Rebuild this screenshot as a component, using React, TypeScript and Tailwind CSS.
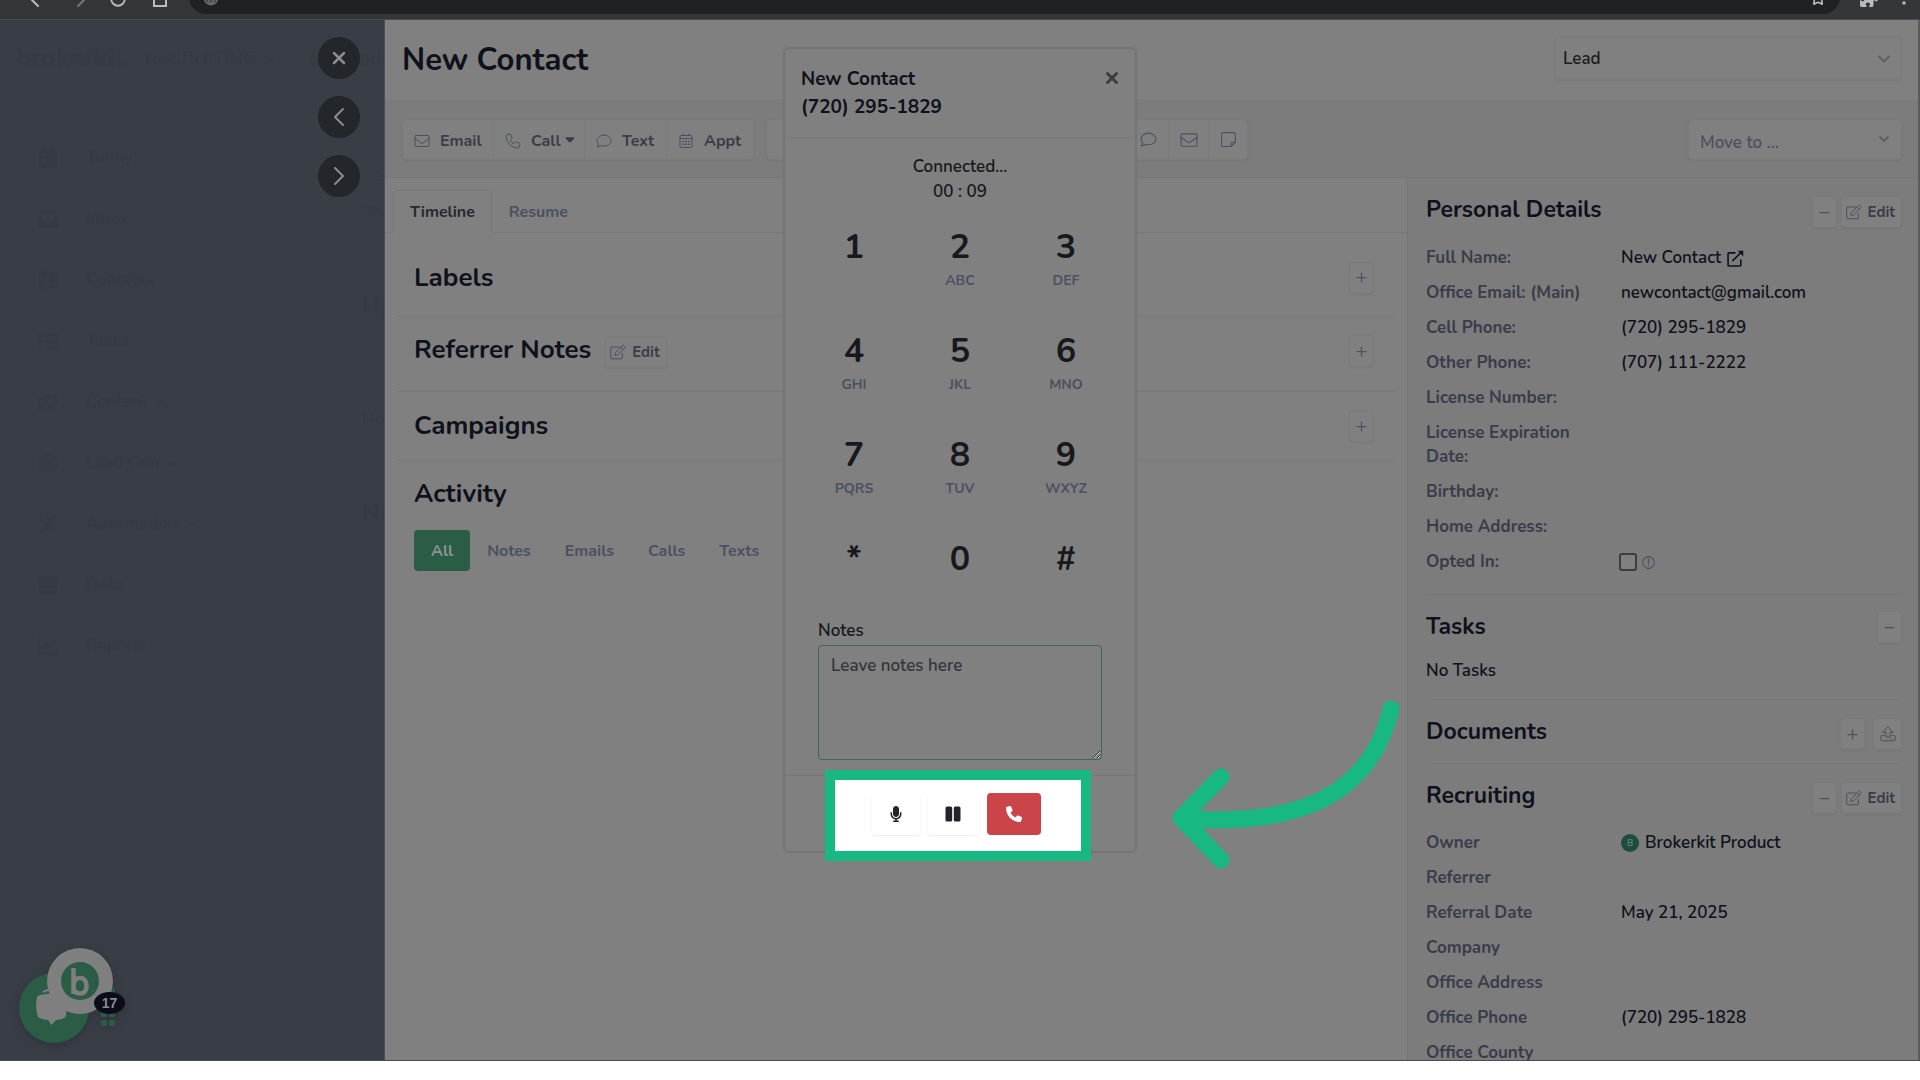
import React from "react";
import type { ReactNode } from "react";
import {
  ArrowLeft,
  ArrowRight,
  RotateCw,
  Globe,
  Star,
  X,
  ChevronDown,
  ChevronLeft,
  ChevronRight,
  Plus,
  Minus,
} from "lucide-react";
import {
  FaCalendarDay,
  FaInbox,
  FaAddressBook,
  FaListCheck,
  FaPhotoFilm,
  FaBullseye,
  FaWandMagicSparkles,
  FaDatabase,
  FaChartLine,
  FaMicrophone,
  FaPhone,
  FaPuzzlePiece,
  FaEllipsisVertical,
  FaCaretDown,
} from "react-icons/fa6";

/* ---------- line icons ---------- */

type IconProps = { className?: string; children: ReactNode };

function LineIcon({ className = "size-4", children }: IconProps) {
  return (
    <svg
      viewBox="0 0 16 16"
      className={className}
      fill="none"
      stroke="currentColor"
      strokeWidth="1"
      strokeLinecap="round"
      strokeLinejoin="round"
      aria-hidden="true"
    >
      {children}
    </svg>
  );
}

const MailIcon = ({ className }: { className?: string }) => (
  <LineIcon className={className}>
    <rect x="1" y="2.5" width="14" height="11" rx="1" />
    <path d="M1 5.5 L6.8 9.9 Q8 10.8 9.2 9.9 L15 5.5" />
  </LineIcon>
);
const HandsetIcon = () => (
  <LineIcon>
    <path d="M4.7 1.1 L1.7 1.8 C1.3 1.9 1 2.2 1 2.6 C1 9.5 6.5 15 13.4 15 C13.8 15 14.1 14.7 14.2 14.3 L14.9 11.3 C15 10.9 14.8 10.5 14.4 10.3 L11.2 8.9 C10.9 8.8 10.5 8.9 10.2 9.1 L8.8 10.8 C7.3 10 6 8.7 5.2 7.2 L6.9 5.8 C7.1 5.5 7.2 5.1 7.1 4.8 L5.7 1.6 C5.5 1.2 5.1 1 4.7 1.1 Z" />
  </LineIcon>
);
const ChatIcon = ({ className }: { className?: string }) => (
  <LineIcon className={className}>
    <path d="M8 2 C4.1 2 1.1 4.4 1.1 7.5 C1.1 8.9 1.7 10.1 2.6 11.1 C2.4 12.3 1.8 13.3 1.1 14 C2.6 14 3.9 13.5 4.9 12.6 C5.9 12.9 6.9 13 8 13 C11.9 13 14.9 10.6 14.9 7.5 C14.9 4.4 11.9 2 8 2 Z" />
  </LineIcon>
);
const CalendarIcon = () => (
  <LineIcon>
    <rect x="2" y="2.5" width="12" height="12" rx="1.3" />
    <path d="M2 5.5 H14 M5 1 V2.5 M11 1 V2.5" />
    <path d="M5 8.5 H5.7 M7.7 8.5 H8.4 M10.4 8.5 H11.1 M5 11.3 H5.7 M7.7 11.3 H8.4 M10.4 11.3 H11.1" strokeWidth="1.4" />
  </LineIcon>
);
const NoteIcon = () => (
  <LineIcon className="size-[17px]">
    <path d="M14.5 10.5 L10.5 14.5 H2.5 Q1.5 14.5 1.5 13.5 V2.5 Q1.5 1.5 2.5 1.5 H13.5 Q14.5 1.5 14.5 2.5 Z M14.5 10.5 H11.5 Q10.5 10.5 10.5 11.5 V14.5" />
  </LineIcon>
);
const EditIcon = () => (
  <LineIcon>
    <path d="M9.5 3 H1.5 Q.7 3 .7 3.8 V14 Q.7 14.8 1.5 14.8 H11.5 Q12.3 14.8 12.3 14 V9.5" />
    <path d="M5.5 8.6 L12.4 1.7 Q13.2 .9 14 1.7 L14.7 2.4 Q15.5 3.2 14.7 4 L7.8 10.9 L5.2 11.3 Z M11 3.2 L13.2 5.4" />
  </LineIcon>
);
const UploadIcon = () => (
  <LineIcon>
    <path d="M8 1 L13 6.3 H10 V11 H6 V6.3 H3 Z" />
    <path d="M4.5 9.5 H2.5 Q.6 9.5 .6 11.2 V13 Q.6 14.8 2.5 14.8 H13.5 Q15.4 14.8 15.4 13 V11.2 Q15.4 9.5 13.5 9.5 H11.5 M10.3 12.6 H10.5 M12.6 12.6 H12.8" />
  </LineIcon>
);
const OpenIcon = () => (
  <svg viewBox="0 0 16 16" className="size-[17px]" fill="none" stroke="currentColor" strokeWidth="1.5" strokeLinejoin="round" aria-hidden="true">
    <path d="M8 2.7 H1.8 Q1 2.7 1 3.5 V14.2 Q1 15 1.8 15 H12.2 Q13 15 13 14.2 V9" />
    <path d="M5 10.5 L13.5 2" />
    <path d="M10 .8 H15.3 V6.1 Z" fill="currentColor" stroke="none" />
  </svg>
);

/* ---------- shared pieces ---------- */

const box = "border border-[#797a7b] bg-[#808080] rounded shadow-[0_1px_2px_#00000010]";

function SmallButton({ label, children }: { label: string; children: ReactNode }) {
  return (
    <button type="button" aria-label={label} className={`${box} flex h-8 min-w-6 items-center justify-center px-1 text-[#4b5160]`}>
      {children}
    </button>
  );
}

function EditButton() {
  return (
    <button type="button" className={`${box} flex h-8 items-center gap-1.5 px-1 pr-1.5 text-[15px] font-bold text-[#393d49]`}>
      <span className="text-[#4b5160]">
        <EditIcon />
      </span>
      Edit
    </button>
  );
}

const plus = <Plus className="size-[15px]" strokeWidth={2} />;
const minus = <Minus className="size-[15px]" strokeWidth={2} />;

/* ---------- browser bar ---------- */

function BrowserBar() {
  return (
    <header className="flex h-5 shrink-0 items-start overflow-hidden border-b border-[#4a4b4e] bg-[#35363a] text-[#bcbcbd]">
      <div className="-mt-[13px] flex w-[189px] shrink-0 items-center pl-[26px]">
        <ArrowLeft className="mr-4 size-6" strokeWidth={2} />
        <ArrowRight className="mr-[19px] size-6 text-[#77787a]" strokeWidth={2} />
        <RotateCw className="mr-[26px] size-[18px]" strokeWidth={2.5} />
        <svg viewBox="0 0 14 16" className="h-4 w-3.5" fill="none" stroke="currentColor" strokeWidth="2" aria-hidden="true">
          <path d="M1 6 L7 1 L13 6 V15 H1 Z" />
        </svg>
      </div>
      <div className="-mt-5 flex h-[34px] flex-1 items-end justify-between rounded-full bg-[#202124] px-3.5 pb-2">
        <Globe className="size-4 fill-[#4a4b4e] text-[#6c6d70]" />
        <Star className="size-4" strokeWidth={2.5} />
      </div>
      <div className="-mt-3 flex w-20 shrink-0 items-center justify-between pt-px pr-2 pl-5">
        <FaPuzzlePiece className="size-[18px]" />
        <FaEllipsisVertical className="size-4" />
      </div>
    </header>
  );
}

/* ---------- dimmed navigation ---------- */

const nav = [
  { name: "Today", icon: FaCalendarDay, menu: false },
  { name: "Inbox", icon: FaInbox, menu: false },
  { name: "Contacts", icon: FaAddressBook, menu: false },
  { name: "Tasks", icon: FaListCheck, menu: false },
  { name: "Content", icon: FaPhotoFilm, menu: true },
  { name: "Lead Gen", icon: FaBullseye, menu: true },
  { name: "Automation", icon: FaWandMagicSparkles, menu: true },
  { name: "Data", icon: FaDatabase, menu: true },
  { name: "Reports", icon: FaChartLine, menu: false },
];

function Sidebar() {
  const circle = "flex size-[42px] items-center justify-center rounded-full bg-[#23262a] text-[#8b8c8e]";
  return (
    <aside className="relative w-[385px] shrink-0 overflow-hidden border-r border-[#4b4e55] bg-[#393d46] text-[#363a43]">
      <div className="flex h-[78px] items-center pl-4 whitespace-nowrap">
        <span className="w-[129px] shrink-0 text-[25px] font-extrabold">brokerkit</span>
        <span className="flex w-[165px] shrink-0 items-center gap-2 text-[19px]">
          RECRUITING <FaCaretDown className="size-3" />
        </span>
        <span className="text-[19px] font-semibold">BK Product</span>
      </div>
      <div className="flex pt-[29px]">
        <nav className="flex w-[362px] shrink-0 flex-col pl-[38px]">
          {nav.map(({ name, icon: Icon, menu }) => (
            <a key={name} href="#" className="flex h-[61px] items-center text-[17px] font-semibold">
              <Icon className="mr-7 size-5" />
              {name}
              {menu && <FaCaretDown className="ml-2 size-3" />}
            </a>
          ))}
        </nav>
        <div className="flex flex-col whitespace-nowrap">
          <p className="mt-9 ml-3.5 text-[17px]">Status</p>
          <p className="mt-3 text-[17px]">Show</p>
          <p className="mt-16 text-2xl font-bold">Upcoming</p>
          <p className="mt-[85px] text-[17px]">No tasks</p>
          <p className="mt-16 text-2xl font-bold">Notes</p>
        </div>
      </div>

      <div className="absolute top-[17px] right-6 flex flex-col gap-[17px]">
        <button type="button" aria-label="Close" className={circle}>
          <X className="size-5" strokeWidth={3} />
        </button>
        <button type="button" aria-label="Previous contact" className={circle}>
          <ChevronLeft className="size-8" strokeWidth={1.5} />
        </button>
        <button type="button" aria-label="Next contact" className={circle}>
          <ChevronRight className="size-8" strokeWidth={1.5} />
        </button>
      </div>

      <ChatWidget />
    </aside>
  );
}

function ChatWidget() {
  return (
    <button type="button" aria-label="Open chat" className="absolute bottom-[9px] left-[12px] h-[114px] w-[120px]">
      <svg viewBox="0 0 120 114" className="h-[114px] w-[120px] drop-shadow-[0_2px_4px_#00000030]" aria-hidden="true">
        <circle cx="42" cy="71" r="35" fill="#2b5c45" />
        <path d="M28 58 Q41 55 54 58 Q55 70 54 79 Q53 82 44 83 L39.5 88 L36 83 Q27 82 25.5 79 Q23 68 25 60 Q26 58 28 58 Z" fill="#7f7f7f" />
        <path d="M31 55 Q36 52 42 53" stroke="#7f7f7f" strokeWidth="2" fill="none" />
        <g fill="#2b5c45">
          <rect x="89" y="74" width="6" height="6" rx="1.5" />
          <rect x="97" y="74" width="6" height="6" rx="1.5" />
          <rect x="89" y="83" width="6" height="6" rx="1.5" />
          <rect x="97" y="83" width="6" height="6" rx="1.5" />
          <rect x="95" y="51" width="8" height="8" rx="2" />
        </g>
        <circle cx="68" cy="44" r="33" fill="#7f7f7f" />
        <circle cx="68" cy="44" r="19" fill="#2b5c45" />
        <path d="M61.5 31 V57 M61.5 49 C61.5 43.5 64 41 68 41 C72 41 74.5 44 74.5 49 C74.5 54 72 56.5 68 56.5 C64 56.5 61.5 54 61.5 49" fill="none" stroke="#7f7f7f" strokeWidth="4.5" />
        <ellipse cx="97.5" cy="66" rx="15.5" ry="11" fill="#0a0d17" />
      </svg>
      <span className="absolute top-[55px] left-[82px] flex h-[22px] w-[31px] items-center justify-center font-['Liberation_Sans'] text-sm font-bold text-[#8a8b8e]">
        17
      </span>
    </button>
  );
}

/* ---------- contact header and toolbar ---------- */

function ContactHeader() {
  return (
    <div className="flex h-[81px] shrink-0 items-start justify-between border-b border-[#787879] pt-[17px] pr-4 pl-[17px]">
      <h1 className="text-[31px] leading-[46px] font-bold text-[#0f121b]">New Contact</h1>
      <div className="relative">
        <select
          aria-label="Contact stage"
          className={`${box} h-[43px] w-[348px] appearance-none px-2 text-[17px] font-semibold text-[#1b1d21]`}
        >
          <option>Lead</option>
        </select>
        <ChevronDown className="pointer-events-none absolute top-3 right-2 size-5 text-[#5f6063]" strokeWidth={2.5} />
      </div>
    </div>
  );
}

function Toolbar() {
  const item = "flex h-full items-center gap-2.5 border-r border-[#797a7b] pt-0.5 pl-[11px] last:border-r-0";
  const icon = "text-[#4b5160]";
  return (
    <div className="flex h-[77px] shrink-0 items-center justify-between border-b border-[#757677] bg-[#7c7c7d] pt-px pr-4 pl-[17px]">
      <div className="flex gap-3 text-base font-bold text-[#393d49]">
        <div className={`${box} flex h-[41px]`}>
          <button type="button" className={`${item} w-[91px]`}>
            <span className={icon}><MailIcon /></span>Email
          </button>
          <button type="button" className={`${item} w-[91px]`}>
            <span className={icon}><HandsetIcon /></span>
            <span className="flex items-center gap-0.5">Call <FaCaretDown className="-mt-1 size-3.5" /></span>
          </button>
          <button type="button" className={`${item} w-[82px]`}>
            <span className={icon}><ChatIcon /></span>Text
          </button>
          <button type="button" className={`${item} w-[86px]`}>
            <span className={icon}><CalendarIcon /></span>Appt
          </button>
        </div>
        <div className={`${box} flex h-[41px] w-[482px] justify-end ${icon}`}>
          <button type="button" aria-label="Log text" className="flex w-[40px] items-center justify-center border-r border-[#797a7b]">
            <ChatIcon className="size-[17px]" />
          </button>
          <button type="button" aria-label="Log email" className="flex w-10 items-center justify-center border-r border-[#797a7b]">
            <MailIcon className="size-[18px]" />
          </button>
          <button type="button" aria-label="Log note" className="flex w-[38px] items-center justify-center">
            <NoteIcon />
          </button>
        </div>
      </div>
      <div className="relative">
        <select
          aria-label="Move to"
          className={`${box} h-[41px] w-[214px] appearance-none px-[11px] pt-1.5 text-[17px] font-semibold text-[#4b5160]`}
        >
          <option>Move to ...</option>
        </select>
        <ChevronDown className="pointer-events-none absolute top-3 right-2.5 size-4 text-[#5f6063]" strokeWidth={3} />
      </div>
    </div>
  );
}

/* ---------- timeline column ---------- */

function Timeline() {
  const section = "ml-[11px] mr-3 flex items-center justify-between border-b border-[#777778] pr-[21px] pl-[18px]";
  const heading = "text-[26px] font-bold leading-8 text-[#0f121b]";
  return (
    <main className="min-w-0 flex-1 bg-[#808080]">
      <div role="tablist" className="flex h-[55px] items-end border-b border-[#787879] pl-2 text-base font-bold">
        <button type="button" role="tab" aria-selected="true" className="-mb-px h-[43px] rounded-t border border-b-0 border-[#757677] bg-[#808080] px-4 text-[#26292e]">
          Timeline
        </button>
        <button type="button" role="tab" aria-selected="false" className="h-[41px] px-[17px] text-[#4b5160]">
          Resume
        </button>
      </div>

      <section className={`${section} h-[84px] pt-1.5`}>
        <h2 className={heading}>Labels</h2>
        <SmallButton label="Add label">{plus}</SmallButton>
      </section>
      <section className={`${section} h-[75px]`}>
        <div className="flex items-center gap-3.5 pb-1">
          <h2 className={`${heading} pb-1`}>Referrer Notes</h2>
          <EditButton />
        </div>
        <div className="pb-1.5">
          <SmallButton label="Expand referrer notes">{plus}</SmallButton>
        </div>
      </section>
      <section className={`${section} h-[69px]`}>
        <h2 className={heading}>Campaigns</h2>
        <SmallButton label="Add campaign">{plus}</SmallButton>
      </section>
      <section className="pt-[17px] pl-[29px]">
        <h2 className={heading}>Activity</h2>
        <div className="mt-5 flex h-[41px] items-center text-base font-bold text-[#4b5160]">
          <button type="button" className="h-full rounded bg-[#2b5c45] px-[17px] text-[#8b9590]">All</button>
          <button type="button" className="px-[17px]">Notes</button>
          <button type="button" className="px-[17px]">Emails</button>
          <button type="button" className="px-[17px]">Calls</button>
          <button type="button" className="px-[17px]">Texts</button>
        </div>
      </section>
    </main>
  );
}

/* ---------- details column ---------- */

function Row({ label, value }: { label: string; value?: ReactNode }) {
  return (
    <div className="flex">
      <dt className="w-[195px] shrink-0 pr-10 font-bold text-[#393d49]">{label}</dt>
      <dd className="flex-1 font-semibold text-[#0f121b]">{value}</dd>
    </div>
  );
}

function Details() {
  const heading = "text-[23px] font-bold leading-8 text-[#0f121b]";
  const top = "flex items-start justify-between";
  return (
    <aside className="w-[511px] shrink-0 overflow-hidden border-l border-[#757677] bg-[#7c7c7d] pr-4 pl-[18px] text-[17px] leading-6">
      <section className="border-b border-[#757677] pt-4 pb-5">
        <div className={top}>
          <h2 className={heading}>Personal Details</h2>
          <div className="flex gap-1 pt-0.5">
            <SmallButton label="Collapse personal details">{minus}</SmallButton>
            <EditButton />
          </div>
        </div>
        <dl className="mt-[18px] flex flex-col gap-[11px]">
          <Row
            label="Full Name:"
            value={
              <a href="#" className="flex items-center gap-1.5">
                New Contact <OpenIcon />
              </a>
            }
          />
          <Row label="Office Email: (Main)" value="newcontact@gmail.com" />
          <Row label="Cell Phone:" value="(720) 295-1829" />
          <Row label="Other Phone:" value="(707) 111-2222" />
          <Row label="License Number:" />
          <Row label="License Expiration Date:" />
          <Row label="Birthday:" />
          <Row label="Home Address:" />
          <Row
            label="Opted In:"
            value={
              <span className="-ml-0.5 flex h-6 items-center gap-[5px]">
                <input type="checkbox" aria-label="Opted in" className="size-[18px] appearance-none rounded-[3px] border-2 border-[#3d3d3f] bg-[#808080]" />
                <LineIcon className="size-[13px] text-[#4b5160]">
                  <circle cx="8" cy="8" r="7.2" strokeWidth="1.3" />
                  <path d="M8 4 V8.8 M8 11.6 V11.8" strokeWidth="1.7" />
                </LineIcon>
              </span>
            }
          />
        </dl>
      </section>
      <section className="border-b border-[#757677] pt-4 pb-4">
        <div className={top}>
          <h2 className={heading}>Tasks</h2>
          <SmallButton label="Collapse tasks">{minus}</SmallButton>
        </div>
        <p className="mt-4 font-semibold text-[#0f121b]">No Tasks</p>
      </section>
      <section className="border-b border-[#757677] pt-4 pb-[13px]">
        <div className={top}>
          <h2 className={heading}>Documents</h2>
          <div className="flex gap-2 pt-0.5">
            <SmallButton label="Add document">{plus}</SmallButton>
            <button type="button" aria-label="Upload document" className={`${box} flex h-8 w-[29px] items-center justify-center text-[#4b5160]`}>
              <UploadIcon />
            </button>
          </div>
        </div>
      </section>
      <section className="pt-4">
        <div className={top}>
          <h2 className={heading}>Recruiting</h2>
          <div className="flex gap-1 pt-0.5">
            <SmallButton label="Collapse recruiting">{minus}</SmallButton>
            <EditButton />
          </div>
        </div>
        <dl className="mt-[17px] flex flex-col gap-[11px]">
          <Row
            label="Owner"
            value={
              <span className="flex items-center gap-1.5">
                <span className="flex size-[18px] items-center justify-center rounded-full bg-[#1f4c40] text-[9px] leading-none font-bold text-[#5d7d73]">B</span>
                Brokerkit Product
              </span>
            }
          />
          <Row label="Referrer" />
          <Row label="Referral Date" value="May 21, 2025" />
          <Row label="Company" />
          <Row label="Office Address" />
          <Row label="Office Phone" value="(720) 295-1828" />
          <Row label="Office County" />
        </dl>
      </section>
    </aside>
  );
}

/* ---------- call dialog ---------- */

const keys = [
  ["1", ""],
  ["2", "ABC"],
  ["3", "DEF"],
  ["4", "GHI"],
  ["5", "JKL"],
  ["6", "MNO"],
  ["7", "PQRS"],
  ["8", "TUV"],
  ["9", "WXYZ"],
  ["*", ""],
  ["0", ""],
  ["#", ""],
];

function CallDialog() {
  const control = "flex h-[42px] items-center justify-center rounded";
  return (
    <div role="dialog" aria-label="Call" className="absolute top-[47px] left-1/2 w-[354px] -translate-x-1/2 rounded-md border-2 border-[#747475] bg-[#808080] text-[#17191c]">
      <div className="flex items-start justify-between border-b border-[#757677] pt-4 pr-3.5 pb-4 pl-4 text-[19px] leading-7 font-bold text-[#0f121b]">
        <p>
          New Contact
          <br />
          (720) 295-1829
        </p>
        <button type="button" aria-label="Close" className="mt-1 text-[#3c3d3f]">
          <X className="size-[18px]" strokeWidth={4} />
        </button>
      </div>
      <div className="px-4 pt-4 text-center">
        <p className="text-[17px] leading-[25px] font-semibold">
          Connected...
          <br />
          00 : 09
        </p>
        <div className="mt-[5px] grid grid-cols-3 grid-rows-[104px_104px_104px_96px]">
          {keys.map(([digit, letters]) => (
            <button key={digit} type="button" className="flex flex-col items-center pt-4">
              <span className="text-[34px] leading-[44px] font-bold">{digit}</span>
              <span className="text-sm leading-6 font-bold text-[#4b5160]">{letters}</span>
            </button>
          ))}
        </div>
      </div>
      <div className="flex flex-col px-[33px] pb-[15px]">
        <label htmlFor="call-notes" className="text-[17px] leading-7 font-semibold">
          Notes
        </label>
        <textarea
          id="call-notes"
          placeholder="Leave notes here"
          className="h-[115px] rounded border border-[#3b6a56] bg-[#808080] px-3 py-2 text-[17px] leading-6 font-semibold placeholder:text-[#33363c]"
        />
      </div>
      <div className="flex justify-center border-t border-[#757677] pt-1">
        <div className="mr-1 flex h-[71px] w-[246px] items-center justify-center bg-white pr-1 pb-1 text-[#212529] ring-10 ring-[#18b882]">
          <button type="button" aria-label="Mute" className={`${control} w-12 shadow-[0_1px_2px_#00000014]`}>
            <FaMicrophone className="size-4" />
          </button>
          <button type="button" aria-label="Hold" className={`${control} ml-2 w-[51px] shadow-[0_1px_2px_#00000014]`}>
            <svg viewBox="0 0 16 16" className="size-4" fill="currentColor" aria-hidden="true">
              <rect x="0.5" y="0.5" width="6.7" height="15" rx="1.5" />
              <rect x="8.8" y="0.5" width="6.7" height="15" rx="1.5" />
            </svg>
          </button>
          <button type="button" aria-label="Hang up" className={`${control} ml-2 w-[54px] bg-[#ca444a] text-white`}>
            <FaPhone className="size-4" />
          </button>
        </div>
      </div>
      <svg
        viewBox="0 0 240 180"
        className="pointer-events-none absolute bottom-[-28px] left-full ml-8 h-[180px] w-[240px]"
        fill="none"
        stroke="#18b882"
        strokeWidth="17"
        strokeLinecap="round"
        strokeLinejoin="round"
        aria-hidden="true"
      >
        <path d="M224 10 C206 84 150 128 20 120" />
        <path d="M54 78 L14 119 L54 161" />
      </svg>
    </div>
  );
}

export default function App() {
  return (
    <div className="relative flex h-screen flex-col bg-white font-[Nunito,Lato,sans-serif]">
      <BrowserBar />
      <div className="flex min-h-0 flex-1 border-b border-[#4b4c50] bg-[#808080]">
        <Sidebar />
        <div className="flex min-w-0 flex-1 flex-col border-r-2 border-[#5a5a5c]">
          <ContactHeader />
          <Toolbar />
          <div className="flex min-h-0 flex-1">
            <Timeline />
            <Details />
          </div>
        </div>
      </div>
      <div className="h-[19px] shrink-0" />
      <CallDialog />
    </div>
  );
}
